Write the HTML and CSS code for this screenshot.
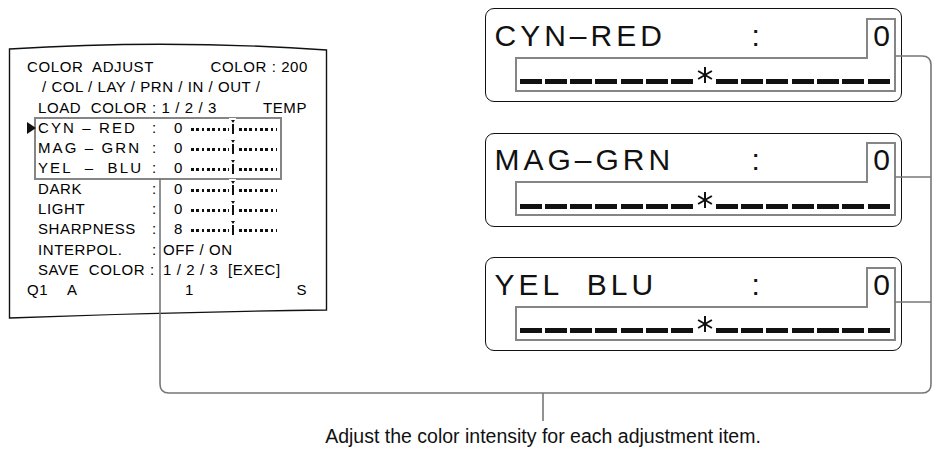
FILE: index.html
```html
<!DOCTYPE html>
<html lang="en">
<head>
    <meta charset="UTF-8">
    <title>Color adjust</title>
    <link rel="stylesheet" href="styles.css">
</head>
<body>
<div class="page">
    <div class="diagram">
        <div class="monitor">
            <svg class="frame" width="318" height="273" viewBox="0 0 318 273">
                <path d="M0.5,4 Q159,-6 317.5,5 L317.5,265 Q159,267 0.5,273 Z" fill="none" stroke="#111" stroke-width="1.4"/>
            </svg>
            <div class="row top"><span>COLOR  ADJUST</span><span>COLOR : 200</span></div>
            <div class="row menu">/ COL / LAY / PRN / IN / OUT /</div>
            <div class="row load"><span>LOAD  COLOR : 1 / 2 / 3</span><span>TEMP</span></div>
            <div class="group">
                <span class="cursor"></span>
                <div class="row item"><span class="lbl wide">CYN – RED</span><span class="sep">:</span><span class="val">0</span><span class="scale"><i></i></span></div>
                <div class="row item"><span class="lbl wide">MAG – GRN</span><span class="sep">:</span><span class="val">0</span><span class="scale"><i></i></span></div>
                <div class="row item"><span class="lbl wide">YEL  –  BLU</span><span class="sep">:</span><span class="val">0</span><span class="scale"><i></i></span></div>
            </div>
            <div class="row item"><span class="lbl">DARK</span><span class="sep">:</span><span class="val">0</span><span class="scale"><i></i></span></div>
            <div class="row item"><span class="lbl">LIGHT</span><span class="sep">:</span><span class="val">0</span><span class="scale"><i></i></span></div>
            <div class="row item"><span class="lbl">SHARPNESS</span><span class="sep">:</span><span class="val">8</span><span class="scale"><i></i></span></div>
            <div class="row item"><span class="lbl">INTERPOL.</span><span class="sep">:</span><span>OFF / ON</span></div>
            <div class="row item"><span class="lbl save">SAVE  COLOR :</span><span>1 / 2 / 3  [EXEC]</span></div>
            <div class="row status"><span class="q">Q1</span><span class="a">A</span><span class="n">1</span><span>S</span></div>
        </div>

        <div class="panels">
            <div class="panel">
                <div class="panel-top"><span class="big-lbl">CYN–RED</span><span>:</span><span class="big-val">0</span></div>
                <div class="bar">
                    <b></b><b></b><b></b><b></b><b></b><b></b><b></b>
                    <svg class="star" width="18" height="18" viewBox="0 0 18 18"><path d="M9,1 V17 M2.1,5 L15.9,13 M2.1,13 L15.9,5" stroke="#111" stroke-width="2"/></svg>
                    <b></b><b></b><b></b><b></b><b></b><b></b><b></b>
                </div>
                <svg class="callout" width="417" height="94" viewBox="0 0 417 94"><path d="M31,50 H382 V11 H410 V83 H31 Z" fill="none" stroke="#858585" stroke-width="2"/></svg>
            </div>
            <div class="panel">
                <div class="panel-top"><span class="big-lbl">MAG–GRN</span><span>:</span><span class="big-val">0</span></div>
                <div class="bar">
                    <b></b><b></b><b></b><b></b><b></b><b></b><b></b>
                    <svg class="star" width="18" height="18" viewBox="0 0 18 18"><path d="M9,1 V17 M2.1,5 L15.9,13 M2.1,13 L15.9,5" stroke="#111" stroke-width="2"/></svg>
                    <b></b><b></b><b></b><b></b><b></b><b></b><b></b>
                </div>
                <svg class="callout" width="417" height="94" viewBox="0 0 417 94"><path d="M31,50 H382 V11 H410 V83 H31 Z" fill="none" stroke="#858585" stroke-width="2"/></svg>
            </div>
            <div class="panel">
                <div class="panel-top"><span class="big-lbl">YEL  BLU</span><span>:</span><span class="big-val">0</span></div>
                <div class="bar">
                    <b></b><b></b><b></b><b></b><b></b><b></b><b></b>
                    <svg class="star" width="18" height="18" viewBox="0 0 18 18"><path d="M9,1 V17 M2.1,5 L15.9,13 M2.1,13 L15.9,5" stroke="#111" stroke-width="2"/></svg>
                    <b></b><b></b><b></b><b></b><b></b><b></b><b></b>
                </div>
                <svg class="callout" width="417" height="94" viewBox="0 0 417 94"><path d="M31,50 H382 V11 H410 V83 H31 Z" fill="none" stroke="#858585" stroke-width="2"/></svg>
            </div>
        </div>
    </div>

    <p class="caption">Adjust the color intensity for each adjustment item.</p>

    <svg class="leaders" width="932" height="456" viewBox="0 0 932 456">
        <g fill="none" stroke="#777" stroke-width="1.6">
            <path d="M895,56 H922 Q931,56 931,65 V384 Q931,393 922,393 H169 Q160,393 160,384 V178"/>
            <path d="M895,177 H931"/>
            <path d="M895,302 H931"/>
            <path d="M543,393 V421"/>
        </g>
    </svg>
</div>
</body>
</html>
```

FILE: styles.css
```css
body {
    margin: 0;
    background: #fff;
    color: #111;
    font-family: "Liberation Sans", Arial, sans-serif;
}

.page {
    position: relative;
    width: 932px;
    height: 456px;
    overflow: hidden;
}

.diagram {
    display: flex;
    align-items: flex-start;
}

/* left: the on-screen menu */
.monitor {
    position: relative;
    box-sizing: border-box;
    width: 318px;
    height: 273px;
    margin: 45px 0 0 9px;
    padding-top: 12px;
    color: #000;
    font-size: 15px;
    line-height: 20.3px;
    letter-spacing: 0.6px;
}

.frame {
    position: absolute;
    left: 0;
    top: 0;
    overflow: visible;
}

.row {
    display: flex;
    align-items: flex-start;
    white-space: pre;
}

.row.top {
    justify-content: space-between;
    padding: 0 19px 0 18px;
}

.row.menu {
    padding-left: 33px;
    letter-spacing: 0.55px;
}

.row.load {
    justify-content: space-between;
    padding: 0 20px 0 29px;
}

.row.item {
    padding-left: 29px;
}

.group {
    position: relative;
    width: 246px;
    margin-left: 26px;
    outline: 2px solid #858585;
    outline-offset: -1px;
}

.group .row.item {
    padding-left: 3px;
}

.cursor {
    position: absolute;
    left: -8px;
    top: 4px;
    width: 0;
    height: 0;
    border-top: 6px solid transparent;
    border-bottom: 6px solid transparent;
    border-left: 9px solid #111;
}

.lbl {
    width: 114px;
}

.lbl.wide {
    letter-spacing: 2.1px;
}

.lbl.save {
    width: 125px;
}

.sep {
    width: 11px;
}

.val {
    width: 20px;
    text-align: right;
}

.scale {
    position: relative;
    width: 86px;
    height: 20px;
    margin-left: 8px;
    background: repeating-linear-gradient(90deg, #111 0 2.8px, transparent 2.8px 5.3px) 0 10px / 100% 3px no-repeat;
}

.scale i {
    position: absolute;
    left: 38px;
    top: 0;
    width: 7px;
    height: 20px;
    background: #fff;
}

.scale i::before {
    content: "";
    position: absolute;
    left: 2.5px;
    top: 6px;
    width: 2.4px;
    height: 10px;
    background: #111;
}

.scale i::after {
    content: "";
    position: absolute;
    left: 1.5px;
    top: 2px;
    border-left: 2.2px solid transparent;
    border-right: 2.2px solid transparent;
    border-top: 3px solid #111;
}

.row.status {
    padding: 0 20px 0 18px;
}

.status .q {
    width: 40px;
}

.status .a {
    width: 118px;
}

.status .n {
    flex: 1;
}

/* right: enlarged item displays */
.panels {
    display: flex;
    flex-direction: column;
    gap: 30.5px;
    margin: 8px 0 0 158px;
}

.panel {
    position: relative;
    box-sizing: border-box;
    width: 417px;
    height: 94px;
    border: 1.5px solid #111;
    border-radius: 9px;
}

.panel-top {
    display: flex;
    margin-top: 10.5px;
    padding: 0 11px 0 8.5px;
    font-size: 30px;
    line-height: 32px;
    white-space: pre;
}

.big-lbl {
    width: 257px;
    letter-spacing: 4px;
}

.big-val {
    margin-left: auto;
}

.bar {
    display: flex;
    align-items: flex-end;
    gap: 3.3px;
    height: 18px;
    margin: 14.5px 0 0 33.5px;
}

.bar b {
    width: 22px;
    height: 5px;
    background: #111;
}

.star {
    margin: 0 -1px;
}

.callout {
    position: absolute;
    left: -1.5px;
    top: -1.5px;
}

.caption {
    margin: 73px 0 0 154px;
    font-size: 19.5px;
    line-height: 24px;
    text-align: center;
}

.leaders {
    position: absolute;
    left: 0;
    top: 0;
    pointer-events: none;
}
```
